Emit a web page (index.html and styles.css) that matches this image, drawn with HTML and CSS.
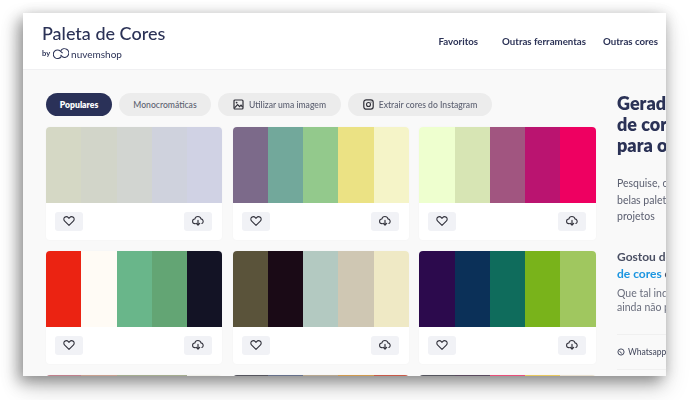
FILE: index.html
```html
<!DOCTYPE html>
<html lang="pt">
<head>
<meta charset="utf-8">
<title>Paleta de Cores</title>
<link rel="stylesheet" href="styles.css">
</head>
<body>
<svg width="0" height="0" class="defs">
  <symbol id="heart" viewBox="0 0 12 12"><path d="M6 10.3 1.7 6.1C.5 4.9.6 3.2 1.7 2.3c1.1-.9 2.8-.7 3.7.3l.6.7.6-.7c.9-1 2.6-1.2 3.7-.3 1.1.9 1.2 2.6 0 3.8Z" fill="none" stroke="#33333d" stroke-width="1.1" stroke-linejoin="round"/></symbol>
  <symbol id="cloud" viewBox="0 0 12 12"><path d="M3.4 8.6H3A2.3 2.3 0 0 1 2.8 4 3.2 3.2 0 0 1 9 3.9a2.4 2.4 0 0 1 .9 4.5" fill="none" stroke="#33333d" stroke-width="1.1" stroke-linecap="round"/><path d="M6 5.4v4.4M4.3 8.4 6 10.2l1.7-1.8" fill="none" stroke="#33333d" stroke-width="1.2" stroke-linecap="round" stroke-linejoin="round"/></symbol>
</svg>
<main class="window">
  <header class="topbar">
    <div class="brand">
      <h1 class="brand-title">Paleta de Cores</h1>
      <div class="brand-by">
        <span class="by">by</span>
        <svg class="logo" width="16" height="12" viewBox="0 0 16 12"><path d="M8.2 8.6A4.3 4.3 0 1 1 8 3.6L9.6 5.2" fill="none" stroke="#2b3256" stroke-width="1.1"/><path d="M6.2 3.2A4.3 4.3 0 1 1 7.8 9.2L6 7.4" fill="none" stroke="#2b3256" stroke-width="1.1" transform="translate(1.6 -.4)"/></svg>
        <span class="nuvem">nuvemshop</span>
      </div>
    </div>
    <nav class="nav">
      <a class="nav-link nav-first">Favoritos</a>
      <a class="nav-link">Outras ferramentas</a>
      <a class="nav-link">Outras cores</a>
    </nav>
  </header>
  <div class="content">
    <section class="main-col">
      <div class="chips">
        <span class="chip chip-active">Populares</span>
        <span class="chip chip-mono">Monocromáticas</span>
        <span class="chip chip-image">
          <svg width="11" height="11" viewBox="0 0 11 11"><rect x="1" y="1" width="9" height="9" rx="1" fill="none" stroke="#2f2f38" stroke-width="1.2"/><circle cx="3.6" cy="3.6" r=".9" fill="#2f2f38"/><path d="M1.5 8.8 4.6 5.6 6.6 7.6 8 6.2 9.6 8" fill="none" stroke="#2f2f38" stroke-width="1.2"/></svg>
          Utilizar uma imagem
        </span>
        <span class="chip chip-insta">
          <svg width="11" height="11" viewBox="0 0 11 11"><rect x=".8" y=".8" width="9.4" height="9.4" rx="2.4" fill="none" stroke="#2f2f38" stroke-width="1.2"/><circle cx="5.5" cy="5.5" r="2" fill="none" stroke="#2f2f38" stroke-width="1.1"/><circle cx="8" cy="3" r=".6" fill="#2f2f38"/></svg>
          Extrair cores do Instagram
        </span>
      </div>
      <div class="grid">
        <article class="card">
          <div class="swatches"><i class="s1a"></i><i class="s1b"></i><i class="s1c"></i><i class="s1d"></i><i class="s1e"></i></div>
          <div class="actions"><button class="icon-btn"><svg width="12" height="12"><use href="#heart"/></svg></button><button class="icon-btn"><svg width="12" height="12"><use href="#cloud"/></svg></button></div>
        </article>
        <article class="card">
          <div class="swatches"><i class="s2a"></i><i class="s2b"></i><i class="s2c"></i><i class="s2d"></i><i class="s2e"></i></div>
          <div class="actions"><button class="icon-btn"><svg width="12" height="12"><use href="#heart"/></svg></button><button class="icon-btn"><svg width="12" height="12"><use href="#cloud"/></svg></button></div>
        </article>
        <article class="card">
          <div class="swatches"><i class="s3a"></i><i class="s3b"></i><i class="s3c"></i><i class="s3d"></i><i class="s3e"></i></div>
          <div class="actions"><button class="icon-btn"><svg width="12" height="12"><use href="#heart"/></svg></button><button class="icon-btn"><svg width="12" height="12"><use href="#cloud"/></svg></button></div>
        </article>
        <article class="card">
          <div class="swatches"><i class="s4a"></i><i class="s4b"></i><i class="s4c"></i><i class="s4d"></i><i class="s4e"></i></div>
          <div class="actions"><button class="icon-btn"><svg width="12" height="12"><use href="#heart"/></svg></button><button class="icon-btn"><svg width="12" height="12"><use href="#cloud"/></svg></button></div>
        </article>
        <article class="card">
          <div class="swatches"><i class="s5a"></i><i class="s5b"></i><i class="s5c"></i><i class="s5d"></i><i class="s5e"></i></div>
          <div class="actions"><button class="icon-btn"><svg width="12" height="12"><use href="#heart"/></svg></button><button class="icon-btn"><svg width="12" height="12"><use href="#cloud"/></svg></button></div>
        </article>
        <article class="card">
          <div class="swatches"><i class="s6a"></i><i class="s6b"></i><i class="s6c"></i><i class="s6d"></i><i class="s6e"></i></div>
          <div class="actions"><button class="icon-btn"><svg width="12" height="12"><use href="#heart"/></svg></button><button class="icon-btn"><svg width="12" height="12"><use href="#cloud"/></svg></button></div>
        </article>
        <article class="card">
          <div class="swatches"><i class="s7a"></i><i class="s7b"></i><i class="s7c"></i><i class="s7d"></i><i class="s7e"></i></div>
        </article>
        <article class="card">
          <div class="swatches"><i class="s8a"></i><i class="s8b"></i><i class="s8c"></i><i class="s8d"></i><i class="s8e"></i></div>
        </article>
        <article class="card">
          <div class="swatches"><i class="s9a"></i><i class="s9b"></i><i class="s9c"></i><i class="s9d"></i><i class="s9e"></i></div>
        </article>
      </div>
    </section>
    <aside class="side">
      <h2 class="side-title">Gerador<br>de cores<br>para o seu</h2>
      <p class="side-text">Pesquise, crie e salve<br>belas paletas para os seus<br>projetos</p>
      <p class="side-lead">Gostou do gerador<br><a class="side-link">de cores</a> e quer mais?</p>
      <p class="side-small">Que tal indicar para alguém<br>ainda não pensou nisso?</p>
      <div class="share">
        <svg width="8" height="8" viewBox="0 0 8 8"><circle cx="4" cy="4" r="3.1" fill="none" stroke="#4a4f63" stroke-width="1"/><path d="M2.8 2.8c0 1.4 1 2.4 2.4 2.4" fill="none" stroke="#4a4f63" stroke-width="1"/></svg>
        <span>Whatsapp</span>
      </div>
    </aside>
  </div>
</main>
</body>
</html>
```

FILE: styles.css
```css
* { box-sizing: border-box; }
html, body { margin: 0; height: 100%; }
body {
  background: #fff;
  padding: 13px 0 0 23px;
  overflow: hidden;
  font-family: Lato, "Noto Sans", sans-serif;
}
.defs { position: absolute; }
.window {
  width: 643px;
  height: 363px;
  background: #f9f9f9;
  overflow: hidden;
  box-shadow: -5px 6px 14px rgba(0,0,0,.36), 0 12px 24px rgba(0,0,0,.14), 3px -1px 12px rgba(0,0,0,.08);
}
.topbar {
  height: 57px;
  background: #fff;
  border-bottom: 1px solid #f0f0f2;
  display: flex;
  align-items: flex-start;
  justify-content: space-between;
  padding: 10px 8px 0 19px;
  filter: blur(.45px);
}
.brand-title {
  margin: 0;
  font-size: 18px;
  line-height: 21px;
  font-weight: 500;
  color: #2b3256;
}
.brand-by { display: flex; align-items: center; gap: 2px; margin-top: 3px; color: #2b3256; height: 13px; }
.by { font-size: 7.5px; font-weight: 700; margin-right: 1px; }
.nuvem { font-size: 10px; line-height: 12px; }
.nav { display: flex; gap: 17px; padding-top: 11px; }
.nav-link { font-size: 9.7px; font-weight: 700; line-height: 14px; color: #2b3256; white-space: nowrap; }
.nav-first { margin-right: 7px; }
.content { display: flex; padding: 23px 0 0 23px; filter: blur(.45px); }
.main-col { width: 550px; flex: none; }
.chips { display: flex; gap: 7px; height: 23px; margin-bottom: 11px; }
.chip {
  height: 23px;
  border-radius: 12px;
  background: #ececec;
  color: #5b5f70;
  font-size: 8.6px;
  font-weight: 500;
  display: flex;
  align-items: center;
  justify-content: center;
  gap: 5px;
  white-space: nowrap;
}
.chip-active { width: 66px; background: #2a3158; color: #fff; font-weight: 800; }
.chip-mono { width: 92px; }
.chip-image { width: 123px; }
.chip-insta { width: 144px; }
.grid {
  width: 549.7px;
  display: grid;
  grid-template-columns: repeat(3, 176.3px);
  column-gap: 10.4px;
  row-gap: 11px;
}
.card {
  height: 113px;
  background: #fff;
  border-radius: 4px;
  box-shadow: 0 0 2px rgba(0,0,0,.04);
  overflow: hidden;
}
.swatches { display: flex; height: 76px; }
.swatches i { flex: 1; }
.actions { display: flex; justify-content: space-between; padding: 9px 10px 0 9px; }
.icon-btn {
  width: 28px;
  height: 18.5px;
  padding: 0;
  border: 0;
  border-radius: 3px;
  background: #f1f2f6;
  display: flex;
  align-items: center;
  justify-content: center;
}
.s1a { background: #d5d8c5; } .s1b { background: #d2d5c9; } .s1c { background: #d2d5d1; } .s1d { background: #cfd2dd; } .s1e { background: #d0d2e4; }
.s2a { background: #7c6a8a; } .s2b { background: #72a89b; } .s2c { background: #93c98c; } .s2d { background: #ebe284; } .s2e { background: #f5f4c8; }
.s3a { background: #eeffcf; } .s3b { background: #d7e5b4; } .s3c { background: #a15580; } .s3d { background: #ba1470; } .s3e { background: #ee0061; }
.s4a { background: #eb2312; } .s4b { background: #fffbf5; } .s4c { background: #69b68a; } .s4d { background: #63a574; } .s4e { background: #131325; }
.s5a { background: #5a533a; } .s5b { background: #1a0a16; } .s5c { background: #b3c9c1; } .s5d { background: #cfc7b3; } .s5e { background: #efe9c5; }
.s6a { background: #2c0a4d; } .s6b { background: #0b3058; } .s6c { background: #0f6c5c; } .s6d { background: #79b31b; } .s6e { background: #a0c75f; }
.s7a { background: #c0808c; } .s7b { background: #c8a090; } .s7c { background: #a5ad90; } .s7d { background: #a5ad90; } .s7e { background: #f0f0ea; }
.s8a { background: #55555e; } .s8b { background: #66708a; } .s8c { background: #b8a890; } .s8d { background: #d09a50; } .s8e { background: #c85a48; }
.s9a { background: #55555e; } .s9b { background: #5a4a5e; } .s9c { background: #e8507a; } .s9d { background: #e8c860; } .s9e { background: #e8e0d0; }
.side { width: 220px; flex: none; margin-left: 21px; }
.side-title { margin: 0; font-size: 18px; line-height: 21px; font-weight: 800; color: #2b3256; white-space: nowrap; }
.side-text { margin: 19px 0 0; font-size: 10.5px; line-height: 16.5px; color: #5b5f70; white-space: nowrap; }
.side-lead { margin: 23px 0 0; font-size: 12px; line-height: 17px; font-weight: 700; color: #4a4f63; white-space: nowrap; }
.side-link { color: #1b95e0; }
.side-small { margin: 4px 0 0; font-size: 10.5px; line-height: 14.5px; color: #6a6e7d; white-space: nowrap; }
.share {
  margin-top: 19px;
  height: 36px;
  border-top: 1px solid #f0f0f0;
  border-bottom: 1px solid #f0f0f0;
  display: flex;
  align-items: center;
  gap: 3px;
  font-size: 8.5px;
  font-weight: 500;
  color: #4a4f63;
}
```
